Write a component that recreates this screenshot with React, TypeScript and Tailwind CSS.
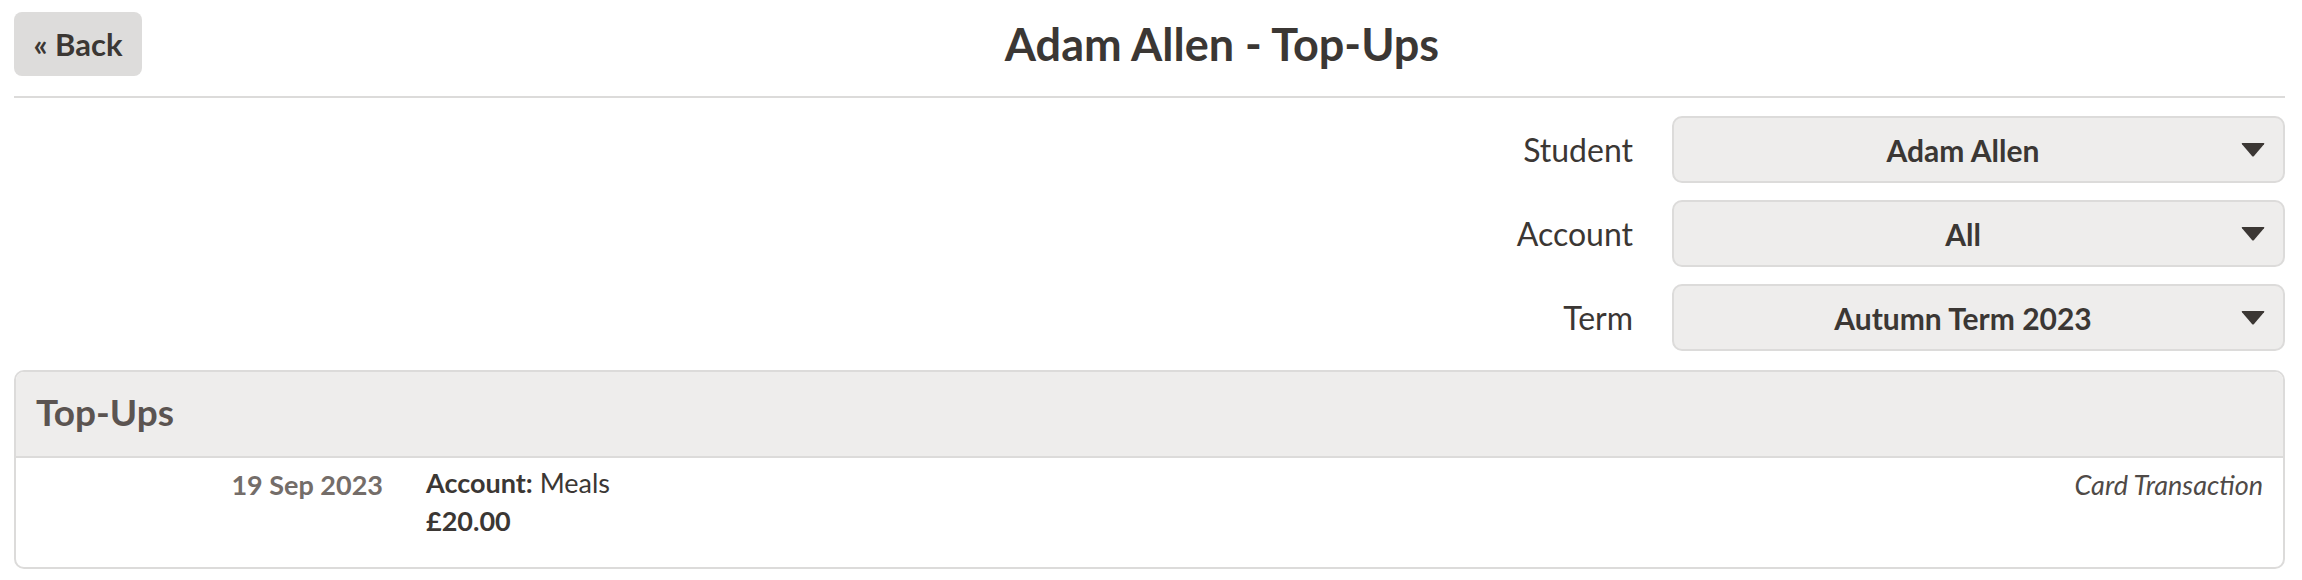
import React from "react";

function Select({ value }: { value: string }) {
  return (
    <div className="relative flex h-[67px] w-[613px] items-center justify-center rounded-[10px] border-2 border-[#dcdbda] bg-[#eeedec] pl-[12px] pr-[43px] text-[30px] font-bold leading-[36px] text-[#3b3734]">
      <span>{value}</span>
      <svg
        className="absolute right-[18px] top-1/2 -translate-y-1/2"
        width="24"
        height="14"
        viewBox="0 0 24 14"
      >
        <path d="M1.5 0 H22.5 Q24 0 23 1.2 L13 13 Q12 14 11 13 L1 1.2 Q0 0 1.5 0 Z" fill="#3b3734" />
      </svg>
    </div>
  );
}

export default function App() {
  return (
    <div className="min-h-[580px] bg-white pl-[14px] pr-[17px] font-['Lato',sans-serif] text-[#3b3734]">
      <div className="flex items-center pt-[12px]">
        <button className="flex h-[64px] w-[128px] items-center justify-center rounded-[8px] bg-[#dddcdb] text-[31px] font-bold leading-[40px] text-[#3b3734]">
          « Back
        </button>
        <h1 className="flex-1 pl-[17px] text-center text-[45px] font-bold leading-[56px]">
          Adam Allen - Top-Ups
        </h1>
      </div>
      <div className="mt-[20px] h-[2px] bg-[#dcdbda]" />
      <div className="mt-[18px] flex flex-col items-end gap-[17px]">
        {[
          ["Student", "Adam Allen"],
          ["Account", "All"],
          ["Term", "Autumn Term 2023"],
        ].map(([l, v]) => (
          <div key={l} className="flex items-center gap-[39px]">
            <span className="text-[32px] leading-[40px]">{l}</span>
            <Select value={v} />
          </div>
        ))}
      </div>
      <div className="mt-[19px] overflow-hidden rounded-[10px] border-2 border-[#dcdbda]">
        <div className="flex h-[86px] items-center border-b-2 border-[#dcdbda] bg-[#eeedec] px-[20px] pb-[4px] text-[37px] font-bold leading-[46px] text-[#5b5451]">
          Top-Ups
        </div>
        <div className="flex px-[20px] pt-[6px] pb-[27px] text-[27px] leading-[38px]">
          <div className="mt-[2px] w-[347px] text-right font-bold text-[#746d69]">19 Sep 2023</div>
          <div className="ml-[43px] flex-1">
            <div>
              <span className="font-bold">Account:</span> Meals
            </div>
            <div className="font-bold">£20.00</div>
          </div>
          <div className="mt-[2px] italic text-[#4f4a47]">Card Transaction</div>
        </div>
      </div>
    </div>
  );
}
